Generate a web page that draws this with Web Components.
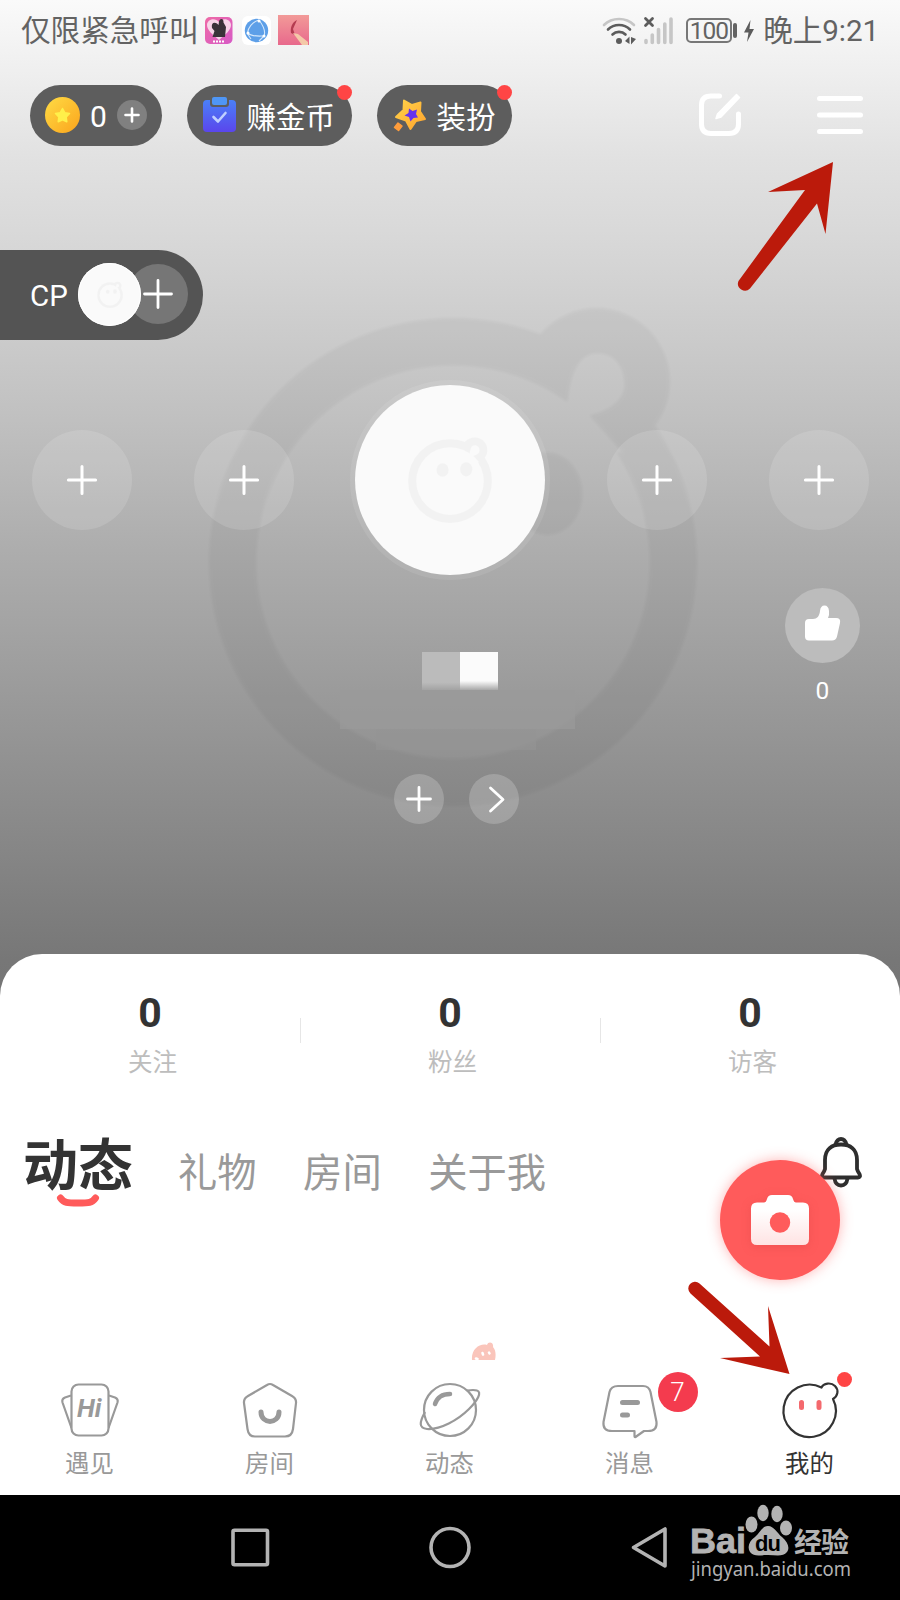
<!DOCTYPE html>
<html lang="zh-CN">
<head>
<meta charset="utf-8">
<title>我的</title>
<style>
  body {
    margin: 0;
    width: 900px;
    height: 1600px;
    overflow: hidden;
    font-family: Roboto, "Noto Sans CJK SC", sans-serif;
  }
</style>
</head>
<body>
<profile-page></profile-page>

<script>
// Small helper: attaches the shadow root and fills it
class BaseElement extends HTMLElement {
  constructor() {
    super();
    this.attachShadow({ mode: 'open' });
  }

  connectedCallback() {
    this.shadowRoot.innerHTML = this.template();
  }
}

// Round face with a bun on the head, used big in the background and small in the avatars
class DollMark extends BaseElement {
  template() {
    return `
    <style>
      :host { display: block; }
      svg { display: block; width: 100%; height: 100%; overflow: visible; }
    </style>
    <svg viewBox="0 0 486 510">
      <mask id="m" maskUnits="userSpaceOnUse" x="0" y="0" width="500" height="520">
        <circle cx="243" cy="267" r="243" fill="#fff"/>
        <circle cx="386" cy="87" r="73" fill="#fff"/>
        <circle cx="243" cy="267" r="196" fill="#000"/>
        <path d="M356 120 C358 88 364 59 387 59 C404 59 414 73 414 90 C414 106 398 117 379 121 L412 158 L340 150 Z" fill="#000"/>
        <ellipse cx="200" cy="203" rx="35" ry="39" fill="#fff"/>
        <ellipse cx="337" cy="199" rx="35" ry="41" fill="#fff"/>
      </mask>
      <rect width="500" height="520" fill="currentColor" mask="url(#m)"/>
    </svg>`;
  }
}
customElements.define('doll-mark', DollMark);

class StatusBar extends BaseElement {
  template() {
    return `
    <style>
      :host {
        display: flex; align-items: center; justify-content: space-between;
        box-sizing: border-box; height: 60px; padding: 1px 21px 0 21px;
        color: #636363; font-size: 29.6px; line-height: 60px;
      }
      .side { display: flex; align-items: center; }
      .apps { margin: -1px 0 0 5px; }
      .net { margin-right: 12px; }
      .battery {
        box-sizing: border-box; width: 46px; height: 25px; border: 2px solid #777; border-radius: 5px;
        font-size: 24.500px; line-height: 22px; text-align: center; letter-spacing: -1px; text-indent: -1px;
      }
      .cap { width: 4px; height: 15px; margin-left: 1px; border-radius: 2px; background: #636363; }
      .bolt { margin: 0 9px 0 7px; }
      .time { letter-spacing: -.1px; }
      svg { display: block; }
    </style>
    <div class="side">
      <span>仅限紧急呼叫</span>
      <svg class="apps" width="106" height="32" viewBox="204 14 106 32">
        <defs>
          <linearGradient id="a" x2="1" y2="1"><stop stop-color="#ee6aa6"/><stop offset="1" stop-color="#d75ac6"/></linearGradient>
          <linearGradient id="b" x2="0" y2="1"><stop stop-color="#f29a98"/><stop offset="1" stop-color="#e8698c"/></linearGradient>
        </defs>
        <rect x="205" y="17" width="27.5" height="27" rx="5" fill="url(#a)"/>
        <path d="M219 40 C212 34 207 30 207 25 C207 19 215 17 219 22 C223 17 231 19 231 25 C231 30 226 34 219 40Z" fill="#f7d5e7"/>
        <path d="M212.500 37 L214.500 31 L212 28 C211 23 214 21.500 217 23.500 L218.500 25 L219 21.500 C219.500 18 224 18 223.500 22.500 L226 27 L225 37Z" fill="#3a3338"/>
        <path d="M213 41.500 H225" stroke="#fff" stroke-width="2" stroke-dasharray="2 1"/>
        <rect x="242" y="16" width="29" height="29" rx="6" fill="#fff"/>
        <circle cx="256.500" cy="30.500" r="11.700" fill="#5d9fe8"/>
        <path d="M259 20 C252 22 248 28 247.500 33 C252 37 258 36 264 36 C266 31 262 24 259 20 M247 33 L251 39 M264 36 L259 41" fill="none" stroke="#d5e8fb" stroke-width="1.100"/>
        <circle cx="259" cy="21" r="1.500" fill="#fff"/><circle cx="248" cy="33" r="1.500" fill="#fff"/><circle cx="264" cy="36" r="1.500" fill="#fff"/>
        <rect x="278" y="15" width="31" height="30" fill="url(#b)"/>
        <path d="M297 20 C292 22 290 28 291 33 L295 35 L293 29 Z" fill="#b43c50"/>
        <path d="M293 33 L298 34 L308 42 V45 H302 Z" fill="#f4c9a8"/>
      </svg>
    </div>
    <div class="side">
      <svg class="net" width="72" height="32" viewBox="603 14 72 32">
        <g fill="none" stroke-linecap="round" stroke-width="2.600">
          <path d="M605 24 C613 16 627 16 635 24" stroke="#c6c6c6"/>
          <path d="M609 28.500 C615 22.500 625 22.500 631 28.500 M613.500 33.500 C617 30 623 30 626.500 33.500" stroke="#5c5c5c"/>
        </g>
        <circle cx="620" cy="40" r="3" fill="#5c5c5c"/>
        <path d="M626 40 L630.500 35.500 V43 M632 36 V43.500 L637 38" fill="#5c5c5c"/>
        <path d="M646.500 17.500 L653.500 24.500 M653.500 17.500 L646.500 24.500" stroke="#5c5c5c" stroke-width="2.800" stroke-linecap="round"/>
        <g stroke="#c6c6c6" stroke-width="3.600" stroke-linecap="round">
          <path d="M647 39.500 V41.500 M653.300 34 V41.500 M659.500 28.500 V41.500 M665.800 23 V41.500 M672 18 V41.500"/>
        </g>
      </svg>
      <div class="battery">100</div><div class="cap"></div>
      <svg class="bolt" width="10" height="22" viewBox="0 0 10 22"><path d="M6.500 0 L0 12.500 H4.500 L3 22 L10 9 H5.500Z" fill="#5c5c5c"/></svg>
      <span class="time">晚上9:21</span>
    </div>`;
  }
}
customElements.define('status-bar', StatusBar);

// Dark pill; shows the red dot when it has the "dot" attribute
class ActionPill extends BaseElement {
  template() {
    return `
    <style>
      :host {
        display: flex; align-items: center; position: relative; box-sizing: border-box; height: 61px;
        padding-left: 15px; border-radius: 31px; background: #5d5d5d; color: #fff; font-size: 29.5px;
      }
      .dot {
        position: absolute; top: 0; right: 0; width: 15px; height: 15px;
        border-radius: 50%; background: #ff4545;
      }
    </style>
    <slot></slot>
    ${this.hasAttribute('dot') ? '<div class="dot"></div>' : ''}`;
  }
}
customElements.define('action-pill', ActionPill);

class TopBar extends BaseElement {
  template() {
    return `
    <style>
      :host { display: flex; align-items: center; height: 61px; padding: 25px 37px 0 30px; }
      svg { display: block; flex: none; }
      .coins { width: 132px; margin-right: 25px; }
      .earn { width: 165px; margin-right: 25px; }
      .dress { width: 135px; }
      .coins svg, .earn svg, .dress svg { margin-top: -1px; }
      .zero { margin: 2px 10px 0 10px; font-size: 30px; width: 17px; }
      .label { margin: -2px 0 0 9.500px; white-space: nowrap; }
      .edit { margin: -2px 76px 0 auto; }
      .menu { margin-top: -2px; }
    </style>
    <action-pill class="coins">
      <svg width="35" height="36" viewBox="0 0 35 36">
        <defs><linearGradient id="c" x2="1" y2="1"><stop stop-color="#ffdc45"/><stop offset="1" stop-color="#fba41c"/></linearGradient></defs>
        <ellipse cx="17.500" cy="18" rx="17.500" ry="18" fill="url(#c)"/>
        <path d="M17.500 11.500 L19.800 15.700 L24.500 16.600 L21.200 20 L21.800 24.800 L17.500 22.800 L13.200 24.800 L13.800 20 L10.500 16.600 L15.200 15.700Z" fill="#fff04a" stroke="#fff04a" stroke-width="1.500" stroke-linejoin="round"/>
      </svg>
      <span class="zero">0</span>
      <svg width="30" height="30" viewBox="0 0 30 30">
        <circle cx="15" cy="15" r="15" fill="#808080"/>
        <path d="M8.500 15 H21.500 M15 8.500 V21.500" stroke="#fff" stroke-width="2.600" stroke-linecap="round"/>
      </svg>
    </action-pill>
    <action-pill class="earn" dot>
      <svg width="35" height="36" viewBox="0 0 35 36">
        <defs><linearGradient id="d" x2="0" y2="1"><stop stop-color="#4a80f8"/><stop offset="1" stop-color="#5a46ec"/></linearGradient></defs>
        <rect x="1" y="3" width="33" height="32" rx="4" fill="url(#d)"/>
        <path d="M8 0 H27 V7 Q27 10 24 10 H11 Q8 10 8 7Z" fill="#5d5d5d"/>
        <rect x="10" y="0" width="15" height="8" rx="2" fill="#4f96f5"/>
        <path d="M11.500 20 L16 24.500 L23.500 16" fill="none" stroke="#bfd0ff" stroke-width="2.600" stroke-linecap="round" stroke-linejoin="round"/>
      </svg>
      <span class="label">赚金币</span>
    </action-pill>
    <action-pill class="dress" dot>
      <svg width="35" height="36" viewBox="0 0 35 36">
        <defs><linearGradient id="e" x2="1" y2="1"><stop stop-color="#ffd34a"/><stop offset="1" stop-color="#ffa42e"/></linearGradient></defs>
        <path d="M12 3.500 L20 8 L28.500 5.500 L28 14.500 L33 22 L24 24 L18.500 32 L14 23.500 L4 20 L11.500 13Z" fill="url(#e)" stroke="url(#e)" stroke-width="2" stroke-linejoin="round"/>
        <path d="M17 11.500 L20.500 14 L25 12.500 L24 17 L26 20.500 L21.500 21 L18.500 24.500 L17 20 L12.500 18.500 L16.500 16Z" fill="#6532ee"/>
        <path d="M6 26 L10 29 L6.500 33.500 L2.500 30.500Z" fill="#ff9d3c" stroke="#ff9d3c" stroke-width="1.500" stroke-linejoin="round"/>
      </svg>
      <span class="label">装扮</span>
    </action-pill>
    <svg class="edit" width="42" height="43" viewBox="0 0 42 43" fill="none" stroke="#fff" stroke-linecap="round">
      <path d="M20.500 3 H12 Q2.500 3 2.500 12 V31 Q2.500 40.500 12 40.500 H30 Q39.500 40.500 39.500 31 V21" stroke-width="5"/>
      <path d="M37.500 1.500 L40.500 4.500 L22 24 L17 25.500 L18.500 21Z" fill="#fff" stroke-width="1.500" stroke-linejoin="round"/>
    </svg>
    <svg class="menu" width="46" height="40" viewBox="0 0 46 40">
      <path d="M2.500 3.500 H43.500 M2.500 20 H43.500 M2.500 36.500 H43.500" stroke="#fff" stroke-width="5" stroke-linecap="round"/>
    </svg>`;
  }
}
customElements.define('top-bar', TopBar);

class CpBar extends BaseElement {
  template() {
    return `
    <style>
      :host {
        display: flex; align-items: center; box-sizing: border-box; width: 203px; height: 90px; margin-top: 104px;
        padding: 0 0 2px 30px; border-radius: 0 45px 45px 0; background: #545454;
        color: #fff; font-size: 29.500px;
      }
      span { width: 48px; padding-top: 4px; box-sizing: border-box; }
      .face {
        display: flex; align-items: center; justify-content: center; position: relative;
        width: 63px; height: 63px; border-radius: 50%; background: #fafafa; box-shadow: inset 0 0 0 1px #fff;
      }
      doll-mark { width: 26px; height: 27px; color: #f2f2f2; }
      svg { margin-left: -13px; display: block; }
    </style>
    <span>CP</span>
    <div class="face"><doll-mark></doll-mark></div>
    <svg width="60" height="60" viewBox="0 0 60 60">
      <circle cx="30" cy="30" r="30" fill="#767676"/>
      <path d="M16.500 30 H43.500 M30 16.500 V43.500" stroke="#fff" stroke-width="2.800" stroke-linecap="round"/>
    </svg>`;
  }
}
customElements.define('cp-bar', CpBar);

// Translucent circle with a plus, or with a chevron when kind="next"
class RoundButton extends BaseElement {
  template() {
    const paths = {
      seat: 'M18.200 25 H31.800 M25 18.200 V31.800',
      next: 'M21.500 14 L34 25.500 L21.500 37',
      add: 'M13.500 25 H36.500 M25 13.500 V36.500'
    };
    return `
    <style>
      :host { display: block; width: 50px; height: 50px; border-radius: 50%; background: rgba(255, 255, 255, .2); }
      :host([kind="seat"]) { width: 100px; height: 100px; background: rgba(255, 255, 255, .13); }
      :host([kind="seat"]) path { stroke-width: 1.5px; }
      svg { display: block; width: 100%; height: 100%; }
    </style>
    <svg viewBox="0 0 50 50">
      <path d="${paths[this.getAttribute('kind')]}"
        fill="none" stroke="#fff" stroke-width="2.800" stroke-linecap="round" stroke-linejoin="round"/>
    </svg>`;
  }
}
customElements.define('round-button', RoundButton);

class HeroPanel extends BaseElement {
  template() {
    return `
    <style>
      :host { display: flex; flex-direction: column; height: 954px; position: relative; }
      .backdrop {
        position: absolute; left: 209px; top: 294px; width: 488px; height: 512px;
        color: #000; opacity: .034; filter: blur(1.5px);
      }
      .seats {
        display: flex; align-items: center; justify-content: space-between; position: relative;
        margin-top: 40px; padding: 0 31px 0 31.500px; height: 200px;
      }
      .seats > :nth-child(2) { margin-right: -6.500px; }
      .seats > :nth-child(4) { margin-left: -5.500px; }
      .avatar {
        display: flex; align-items: center; justify-content: center; box-sizing: border-box;
        width: 200px; height: 200px; border: 5px solid rgba(255, 255, 255, .09); border-radius: 50%;
        background: #fafafa; background-clip: padding-box;
      }
      .avatar doll-mark { width: 84px; height: 88px; color: #f2f2f2; margin-bottom: 2px; }
      .like {
        display: flex; flex-direction: column; align-items: center; align-self: flex-end; position: relative;
        width: 75px; height: 63px; margin: 8px 40px 0 0;
        color: #fff; font-size: 24.500px; line-height: 56px;
      }
      .name { display: flex; position: relative; height: 38px; margin: .5px 0 0 422px; }
      .name i { width: 38px; height: 38px; background: linear-gradient(#bbb 80%, #a3a3a3); }
      .name i + i { background: linear-gradient(#fbfbfb 76%, #a8a8a8); }
      .patch { width: 235px; height: 39px; margin-left: 340px; background: #9a9a9a; opacity: .7; position: relative; }
      .patch.low { width: 160px; height: 21px; margin-left: 376px; background: #949494; opacity: .6; }
      .actions { display: flex; gap: 25px; margin: 24px 0 0 394px; position: relative; }
      svg { display: block; flex: none; }
    </style>
    <doll-mark class="backdrop"></doll-mark>
    <status-bar></status-bar>
    <top-bar></top-bar>
    <cp-bar></cp-bar>
    <div class="seats">
      <round-button kind="seat"></round-button>
      <round-button kind="seat"></round-button>
      <div class="avatar"><doll-mark></doll-mark></div>
      <round-button kind="seat"></round-button>
      <round-button kind="seat"></round-button>
    </div>
    <div class="like">
      <svg width="75" height="75" viewBox="0 0 75 75">
        <circle cx="37.500" cy="37.500" r="37.500" fill="#bcbcbc"/>
        <path d="M24 31 H28 C32 31 34.500 28 35 23 Q35.500 17.500 39.500 17.500 Q43.500 17.500 44 23 Q44.500 27 43 30 H51 Q56 30 55 35 L52 48.500 Q51 52.500 47 52.500 H24 Q20 52.500 20 48.500 V35 Q20 31 24 31Z" fill="#fff"/>
      </svg>
      <span>0</span>
    </div>
    <div class="name"><i></i><i></i></div>
    <div class="patch"></div>
    <div class="patch low"></div>
    <div class="actions">
      <round-button kind="add"></round-button>
      <round-button kind="next"></round-button>
    </div>`;
  }
}
customElements.define('hero-panel', HeroPanel);

class StatItem extends BaseElement {
  template() {
    return `
    <style>
      :host { display: flex; flex-direction: column; align-items: center; flex: 1; }
      b { font-size: 41px; line-height: 48px; color: #333; }
      span { margin-top: 8px; padding-left: 5px; font-size: 24.6px; line-height: 36px; color: #bdbdbd; }
    </style>
    <b>${this.getAttribute('value')}</b>
    <span><slot></slot></span>`;
  }
}
customElements.define('stat-item', StatItem);

class ProfileSheet extends BaseElement {
  template() {
    return `
    <style>
      :host {
        display: block; position: relative; box-sizing: border-box; height: 406px; padding-top: 35px;
        border-radius: 42px 42px 0 0; background: #fff;
      }
      .stats { display: flex; align-items: center; height: 92px; }
      .stats hr { width: 1px; height: 25px; margin: 0 -1px 10px 0; border: 0; background: #e6e6e6; }
      .tabs {
        display: flex; align-items: flex-start; height: 90px; margin-top: 47px; padding: 0 38px 0 23px;
        color: #999; font-size: 39.300px; line-height: 58px; white-space: nowrap;
      }
      .tabs > span { margin: 17px 46.500px 0 0; }
      .tabs > .on {
        display: flex; flex-direction: column; align-items: center; width: 110px; margin: 4px 45px 0 0;
        font-size: 55px; line-height: 68px; font-weight: 700; color: #333;
      }
      .tabs svg { display: block; }
      .on svg { margin: -6px 0 0 -1px; position: relative; }
      .bell { margin: 9px 0 0 auto; }
      .fab {
        display: flex; align-items: center; justify-content: center;
        position: absolute; left: 720px; top: 206px; width: 120px; height: 120px; border-radius: 50%;
        background: #ff5b5b; box-shadow: 0 0 13px rgba(255, 91, 91, .45);
      }
      .fab svg { filter: drop-shadow(0 2px 5px rgba(200, 50, 50, .25)); }
      .mascot { position: absolute; left: 471px; top: 388px; }
    </style>
    <div class="stats">
      <stat-item value="0">关注</stat-item><hr>
      <stat-item value="0">粉丝</stat-item><hr>
      <stat-item value="0">访客</stat-item>
    </div>
    <div class="tabs">
      <span class="on">动态
        <svg width="44" height="14" viewBox="0 0 44 14"><path d="M4.500 4 C8 9 11 9 22 9 C33 9 36 9 39.500 4" fill="none" stroke="#ff5b5b" stroke-width="7" stroke-linecap="round"/></svg>
      </span>
      <span>礼物</span>
      <span>房间</span>
      <span>关于我</span>
      <svg class="bell" width="42" height="51" viewBox="0 0 42 51" fill="none" stroke="#2e2e2e" stroke-width="3.800" stroke-linejoin="round">
        <path d="M5 23 C5 12 12 7.500 21 7.500 C30 7.500 37 12 37 23 V32 Q37.500 34 39.500 37 Q41 40.500 38 40.500 H4 Q1 40.500 2.500 37 Q4.500 34 5 32Z"/>
        <path d="M15.500 7.500 Q17 2 21 2 Q25 2 26.500 7.500 M14.500 41.500 Q15.500 48.500 21 48.500 Q26.500 48.500 27.500 41.500"/>
      </svg>
    </div>
    <svg class="mascot" width="25" height="18" viewBox="0 0 25 18">
      <path d="M1 18 C0 7 9 1 16 3 C17 -1 23 0 22 5 C25 8 25 14 24 18Z" fill="#fac5bb"/>
      <path d="M11.500 11 L12 12.500 M18 10.500 L18.500 11.500 M5 16.500 L6.500 17" stroke="#fff" stroke-width="2.500" stroke-linecap="round"/>
    </svg>
    <div class="fab">
      <svg width="58" height="50" viewBox="0 0 58 50">
        <defs><linearGradient id="f" x2="0" y2="1"><stop offset=".3" stop-color="#fff"/><stop offset="1" stop-color="#ffe3e3"/></linearGradient></defs>
        <path d="M6 7.500 H13 Q15 7.500 16 4 Q17 0 21 0 H37 Q41 0 42 4 Q43 7.500 45 7.500 H52 Q58 7.500 58 13.500 V44 Q58 50 52 50 H6 Q0 50 0 44 V13.500 Q0 7.500 6 7.500Z" fill="url(#f)"/>
        <circle cx="29" cy="27.500" r="10.200" fill="#ff5b5b"/>
      </svg>
    </div>`;
  }
}
customElements.define('profile-sheet', ProfileSheet);

class TabItem extends BaseElement {
  template() {
    return `
    <style>
      :host {
        display: flex; flex-direction: column; align-items: center; position: relative; flex: 1;
        padding-top: 20px; color: #999; font-size: 24.4px; line-height: 36px;
      }
      :host([active]) { color: #333; }
      ::slotted(svg) { display: block; margin-bottom: 6px; overflow: visible; }
      span { margin-left: -1px; }
      .badge {
        position: absolute; left: 117.500px; top: 12px; width: 40px; height: 40px; border-radius: 50%;
        background: #f43b4e; color: #fff; font-size: 26px; line-height: 41px; font-weight: 300; text-align: center;
      }
      .dot { position: absolute; left: 117px; top: 12px; width: 15px; height: 15px; border-radius: 50%; background: #ff4545; }
    </style>
    <slot name="icon"></slot>
    <span>${this.getAttribute('label')}</span>
    ${this.hasAttribute('badge') ? `<div class="badge">${this.getAttribute('badge')}</div>` : ''}
    ${this.hasAttribute('active') ? '<div class="dot"></div>' : ''}`;
  }
}
customElements.define('tab-item', TabItem);

class TabBar extends BaseElement {
  // every icon is drawn on a 60x60 box
  template() {
    const svg = 'svg slot="icon" width="60" height="60" viewBox="0 0 60 60" fill="none" stroke="currentColor" stroke-width="2.200" stroke-linejoin="round"';
    return `
    <style>
      :host { display: flex; height: 135px; background: #fff; }
      text { font: italic 700 26px Roboto, sans-serif; fill: #999; stroke: none; }
    </style>
    <tab-item label="遇见">
      <${svg}>
        <path d="M11 15.500 L5 17.500 Q1.500 19 2.500 22.500 L11.500 48 M49 15.500 L55 17.500 Q58.500 19 57.500 22.500 L48.500 48"/>
        <rect x="11.500" y="4.500" width="37" height="51" rx="7" fill="#fff"/>
        <text x="17" y="37">Hi</text>
      </svg>
    </tab-item>
    <tab-item label="房间">
      <${svg}>
        <path d="M27 5 Q30 3 33 5 L52 16 Q56.500 18.500 56 23 L53 49 Q52 56.500 45 56.500 H15 Q8.500 56.500 7.500 49 L4 23 Q3.500 18.500 8 16Z"/>
        <path d="M21 32 C21 44.500 39 44.500 39 32" stroke-width="5" stroke-linecap="round"/>
      </svg>
    </tab-item>
    <tab-item label="动态">
      <${svg}>
        <circle cx="30" cy="30" r="26"/>
        <path d="M15 24 C17 18 22 14 30 14" stroke-width="4.500" stroke-linecap="round"/>
        <path d="M5 32 C-1 43 -1 48 7 49 C20 50 38 40 49 29 C58 20 62 12 57 10.500 Q54 9.500 47 10.500"/>
      </svg>
    </tab-item>
    <tab-item label="消息" badge="7">
      <${svg}>
        <path d="M18 6 H43 Q49 6 50.500 12 L56.500 42 Q57.500 51 48 51 H44 L35.500 57 Q34.500 57.500 34.500 56 V51 H12 Q2.500 51 3.500 42 L9.500 12 Q11 6 18 6Z"/>
        <path d="M22.500 22.500 H37.500 M22.500 35 H27.500" stroke-width="5" stroke-linecap="round"/>
      </svg>
    </tab-item>
    <tab-item label="我的" active>
      <${svg}>
        <path d="M41.500 7.500 A26.200 26.200 0 1 0 53 19 C58 16 59 10 55 6 C51 2 43.500 3 41.500 7.500Z" fill="#fff"/>
        <path d="M21.500 22.500 V27.500 M39 22.500 V27.500" stroke="#f4696d" stroke-width="5" stroke-linecap="round"/>
      </svg>
    </tab-item>`;
  }
}
customElements.define('tab-bar', TabBar);

class SystemNav extends BaseElement {
  template() {
    return `
    <style>
      :host { display: flex; align-items: center; height: 105px; background: #000; color: #b3b3b3; }
      svg { display: block; flex: none; overflow: visible; }
      .keys { margin: -2px 0 0 230px; }
      .brand { margin: 0 0 0 22px; }
      .bai { font: 700 35px "Liberation Sans", sans-serif; stroke: currentColor; stroke-width: .8px; }
      .du { font: 700 22px "Liberation Sans", sans-serif; fill: #000; }
      .cn { font: 700 28px "Noto Sans CJK SC", sans-serif; }
      .url { font: 20.500px "Noto Sans", sans-serif; }
    </style>
    <svg class="keys" width="438" height="44" viewBox="230 1525 438 44" fill="none" stroke="#b3b3b3" stroke-width="3.600" stroke-linejoin="round">
      <rect x="233" y="1530.300" width="34.500" height="34.500" rx="1.500"/>
      <circle cx="450" cy="1547.500" r="19"/>
      <path d="M633.500 1547.500 L665 1529 V1566Z"/>
    </svg>
    <svg class="brand" width="164" height="90" viewBox="690 1502 164 90" fill="currentColor">
      <text class="bai" x="690" y="1552" textLength="56" lengthAdjust="spacingAndGlyphs">Bai</text>
      <ellipse cx="751.500" cy="1523.500" rx="6" ry="8"/>
      <ellipse cx="763" cy="1512" rx="5.700" ry="8.200"/>
      <ellipse cx="777" cy="1513" rx="5.700" ry="8.200"/>
      <ellipse cx="786" cy="1527" rx="6" ry="7.500"/>
      <path d="M768 1525 C774 1525 777 1532 782 1536 C788 1541 790 1547 787 1551 C783 1556 776 1554 768 1554 C760 1554 754 1556 750 1551 C747 1546 749 1540 755 1536 C760 1532 762 1525 768 1525Z"/>
      <text class="du" x="755" y="1549.500" textLength="26">du</text>
      <text class="cn" x="794" y="1551.500" textLength="55">经验</text>
      <text class="url" x="691" y="1575" textLength="160" lengthAdjust="spacingAndGlyphs">jingyan.baidu.com</text>
    </svg>`;
  }
}
customElements.define('system-nav', SystemNav);

// Red pointer arrows lying over the page
class GuideArrows extends BaseElement {
  template() {
    return `
    <style>
      :host { position: absolute; left: 0; top: 0; }
      svg { display: block; }
    </style>
    <svg width="900" height="1600" viewBox="0 0 900 1600" fill="#bb1a0b">
      <path d="M833 162 L825.500 234 L817 203.500 L750 288.500 A7 7 0 0 1 738.500 281 L805 190 L768 192Z"/>
      <path d="M789.500 1374 L720 1358 L760 1356.500 L690.500 1293.500 A6.700 6.700 0 0 1 699.500 1283.500 L769.500 1346.500 L768 1306Z"/>
    </svg>`;
  }
}
customElements.define('guide-arrows', GuideArrows);

class ProfilePage extends BaseElement {
  template() {
    return `
    <style>
      :host {
        display: flex; flex-direction: column; position: relative; width: 900px; height: 1600px; overflow: hidden;
        background: linear-gradient(#fafafa 0, #e1e1e1 160px, #d9d9d9 230px, #d0d0d0 300px, #c0c0c0 420px,
          #adadad 550px, #a3a3a3 630px, #939393 750px, #868686 850px, #777 960px, #757575 1000px);
      }
    </style>
    <hero-panel></hero-panel>
    <profile-sheet></profile-sheet>
    <tab-bar></tab-bar>
    <system-nav></system-nav>
    <guide-arrows></guide-arrows>`;
  }
}
customElements.define('profile-page', ProfilePage);
</script>
</body>
</html>
